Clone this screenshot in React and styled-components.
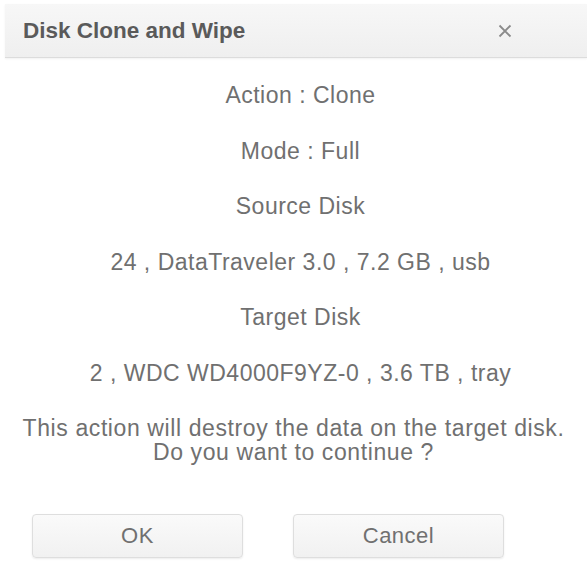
import React from "react";
import styled, { createGlobalStyle } from "styled-components";

const GlobalStyle = createGlobalStyle`
  body {
    margin: 0;
    background: #ffffff;
    font-family: "Liberation Sans", Arial, sans-serif;
  }
`;

const Dialog = styled.div`
  width: 587px;
  height: 562px;
  background: #fff;
  display: flex;
  flex-direction: column;
`;

const Header = styled.div`
  margin: 4px 0 0 5px;
  height: 53px;
  display: flex;
  align-items: center;
  justify-content: space-between;
  padding: 0 45px 0 18px;
  background: linear-gradient(#f7f7f7, #efefef);
  border-bottom: 1px solid #dcdcdc;
  box-shadow: 0 1px 2px rgba(0, 0, 0, 0.06);
`;

const Title = styled.h1`
  margin: 0;
  font-size: 22.5px;
  font-weight: bold;
  color: #5a5a5a;
`;

const Close = styled.button`
  border: none;
  background: none;
  padding: 0;
  width: 74px;
  height: 40px;
  display: flex;
  align-items: center;
  justify-content: center;
  cursor: pointer;
`;

const Content = styled.div`
  padding: 23px 0 0 14px;
  display: flex;
  flex-direction: column;
  align-items: center;
  gap: 27.5px;
`;

const Line = styled.div`
  font-size: 23px;
  letter-spacing: 0.5px;
  line-height: 28px;
  color: #707070;
  text-align: center;
`;

const Warning = styled(Line)`
  line-height: 24px;
  letter-spacing: 0.6px;
  margin: 2px 0 0 -14px;
`;

const Buttons = styled.div`
  display: flex;
  gap: 50px;
  padding: 50px 0 0 32px;
`;

const Button = styled.button`
  width: 211px;
  height: 44px;
  border: 1px solid #dedede;
  border-radius: 4px;
  background: linear-gradient(#fafafa, #f1f1f1);
  box-shadow: 0 1px 2px rgba(0, 0, 0, 0.08);
  font-family: "Liberation Sans", Arial, sans-serif;
  font-size: 22px;
  letter-spacing: 0.5px;
  color: #707070;
  cursor: pointer;
`;

export default function App() {
  return (
    <>
      <GlobalStyle />
      <Dialog>
        <Header>
          <Title>Disk Clone and Wipe</Title>
          <Close aria-label="close">
            <svg width="14" height="14" viewBox="0 0 14 14">
              <path d="M1.5 1.5 L12.5 12.5 M12.5 1.5 L1.5 12.5" stroke="#8a8a8a" strokeWidth="1.8" />
            </svg>
          </Close>
        </Header>
        <Content>
          <Line>Action : Clone</Line>
          <Line>Mode : Full</Line>
          <Line>Source Disk</Line>
          <Line>24 , DataTraveler 3.0 , 7.2 GB , usb</Line>
          <Line>Target Disk</Line>
          <Line>2 , WDC WD4000F9YZ-0 , 3.6 TB , tray</Line>
          <Warning>
            This action will destroy the data on the target disk.
            <br />
            Do you want to continue ?
          </Warning>
        </Content>
        <Buttons>
          <Button>OK</Button>
          <Button>Cancel</Button>
        </Buttons>
      </Dialog>
    </>
  );
}
